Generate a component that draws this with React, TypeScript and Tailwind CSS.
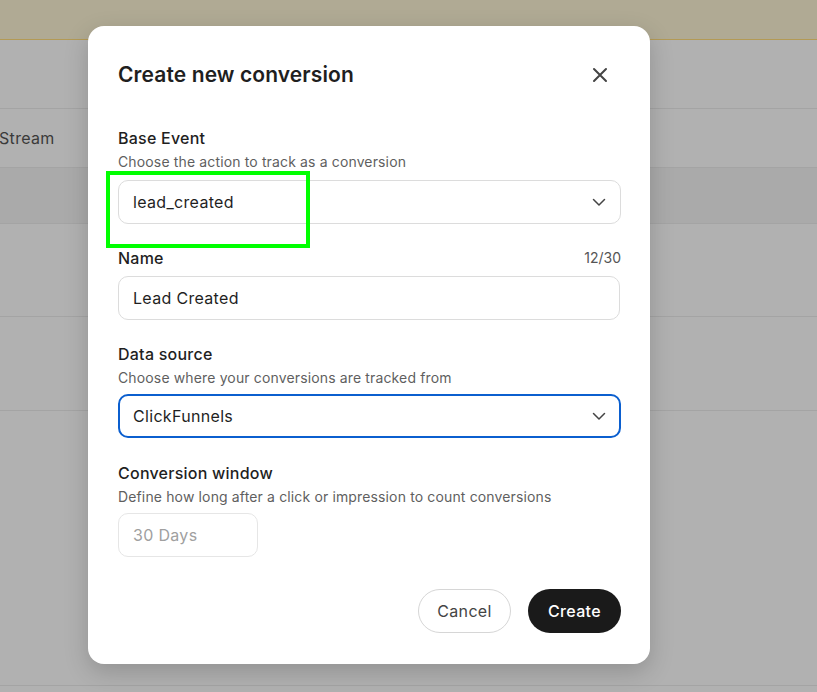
import { useState } from "react"

function Chevron() {
  return (
    <svg width="16" height="16" viewBox="0 0 16 16" fill="none" className="text-[#444]">
      <path d="M2.5 5.5 8 11l5.5-5.5" stroke="currentColor" strokeWidth="1.5" strokeLinecap="round" strokeLinejoin="round" />
    </svg>
  )
}

function CloseIcon() {
  return (
    <svg width="16" height="16" viewBox="0 0 16 16" fill="none" className="text-[#444]">
      <path d="M2 2l12 12M14 2 2 14" stroke="currentColor" strokeWidth="2" strokeLinecap="round" />
    </svg>
  )
}

function Field({
  label,
  hint,
  right,
  gap,
  children,
}: {
  label: string
  hint?: string
  right?: string
  gap: string
  children: React.ReactNode
}) {
  return (
    <div className="flex flex-col">
      <div className="flex items-end justify-between">
        <span className="text-[16px] leading-6 font-medium tracking-[0.015em] text-[#1f1f1f]">{label}</span>
        {right && <span className="text-[14px] leading-6 text-[#555]">{right}</span>}
      </div>
      {hint && <p className="mt-[2px] text-[14px] leading-5 tracking-[0.01em] text-[#5f5f5f]">{hint}</p>}
      <div className={gap}>{children}</div>
    </div>
  )
}

export default function App() {
  const [name] = useState("Lead Created")

  return (
    <div className="relative h-[692px] w-full overflow-hidden bg-[#b1b1b1] font-['Inter',sans-serif]">
      {/* page behind the overlay */}
      <div className="h-[40px] border-b border-[#b39a55] bg-[#b0aa94]" />
      <div className="h-[69px] border-b border-[#a4a4a4]" />
      <div className="flex h-[59px] items-center border-b border-[#a4a4a4] text-[16px] tracking-[0.02em] text-[#3a3a3a]">
        <span className="-ml-[1px]">Stream</span>
      </div>
      <div className="h-[56px] border-b border-[#a4a4a4] bg-[#aaaaaa]" />
      <div className="h-[93px] border-b border-[#a4a4a4]" />
      <div className="h-[94px] border-b border-[#a4a4a4]" />
      <div className="h-[275px] border-b border-[#a4a4a4]" />

      {/* dialog */}
      <div className="absolute left-[88px] top-[26px] w-[562px] rounded-[16px] bg-white pl-[30px] pr-[29px] pt-[33px] pb-[31px] shadow-[0_8px_24px_rgba(0,0,0,0.18)]">
        <div className="flex items-center justify-between">
          <h2 className="text-[21px] leading-8 font-semibold tracking-[0.005em] text-[#1f1f1f]">Create new conversion</h2>
          <button className="mr-[5px] flex h-8 w-8 items-center justify-center">
            <CloseIcon />
          </button>
        </div>

        <div className="mt-[35px] flex flex-col gap-[22px]">
          <Field label="Base Event" hint="Choose the action to track as a conversion" gap="mt-[8px]">
            <div className="flex h-[44px] items-center justify-between rounded-[10px] border border-[#dcdcdc] pl-[14px] pr-[13px] text-[16px] tracking-[0.02em] text-[#1f1f1f]">
              <span>lead_created</span>
              <Chevron />
            </div>
          </Field>

          <Field label="Name" right="12/30" gap="mt-[6px]">
            <div className="mr-[1px] flex h-[44px] items-center rounded-[10px] border border-[#dcdcdc] px-[14px] text-[16px] tracking-[0.02em] text-[#1f1f1f]">
              {name}
            </div>
          </Field>

          <Field label="Data source" hint="Choose where your conversions are tracked from" gap="mt-[6px]">
            <div className="flex h-[44px] items-center justify-between rounded-[10px] border-2 border-[#0b5fcf] pl-[13px] pr-[12px] text-[16px] tracking-[0.02em] text-[#1f1f1f]">
              <span>ClickFunnels</span>
              <Chevron />
            </div>
          </Field>

          <div className="mt-[1px]">
            <Field label="Conversion window" hint="Define how long after a click or impression to count conversions" gap="mt-[6px]">
              <div className="flex h-[44px] w-[140px] items-center rounded-[10px] border border-[#e6e6e6] px-[14px] text-[16px] tracking-[0.02em] text-[#a0a0a0]">
                30 Days
              </div>
            </Field>
          </div>
        </div>

        <div className="mt-[32px] flex justify-end gap-[17px]">
          <button className="h-[44px] w-[93px] rounded-full border border-[#d6d6d6] bg-white text-[16px] tracking-[0.02em] text-[#444]">
            Cancel
          </button>
          <button className="h-[44px] w-[93px] rounded-full bg-[#1a1a1a] text-[16px] font-medium tracking-[0.02em] text-white">
            Create
          </button>
        </div>
      </div>

      {/* highlight annotation */}
      <div className="pointer-events-none absolute left-[106px] top-[171px] h-[77px] w-[204px] border-4 border-[#00ff00]" />
    </div>
  )
}
